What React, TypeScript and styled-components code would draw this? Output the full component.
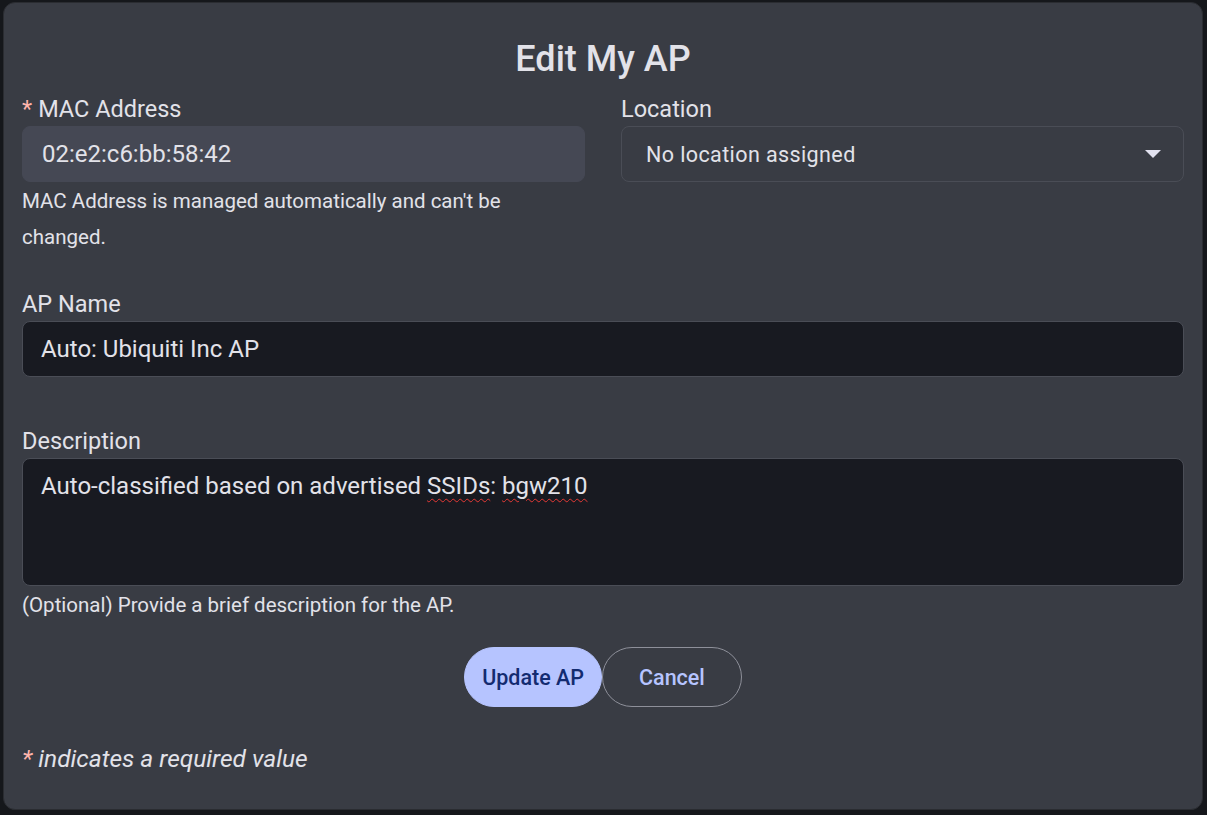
import React from 'react';
import styled, { createGlobalStyle } from 'styled-components';

const Global = createGlobalStyle`
  html, body { margin: 0; background: #15171b; height: 815px; overflow: hidden; }
  * { box-sizing: border-box; }
`;

const Dialog = styled.div`
  margin: 2px 4px 0 3px;
  height: 808px;
  background: #393c44;
  border-radius: 12px;
  border: 1px solid #2a2c31;
  padding: 0 18px;
  font-family: Roboto, "Liberation Sans", sans-serif;
  color: #e2e2e9;
`;

const Title = styled.h2`
  margin: 0;
  padding-top: 35px;
  text-align: center;
  font-size: 36px;
  font-weight: 500;
  line-height: 42px;
`;

const Row = styled.div`
  display: grid;
  grid-template-columns: 1fr 1fr;
  gap: 36px;
  margin-top: 13px;
`;

const Field = styled.div<{ $top?: number }>`
  display: flex;
  flex-direction: column;
  margin-top: ${p => p.$top ?? 0}px;
`;

const Label = styled.label`
  font-size: 23.5px;
  line-height: 32px;
  margin-bottom: 1px;
`;

const Star = styled.span`
  color: #ffb4ab;
  margin-right: 6px;
`;

const Input = styled.div<{ $variant: 'disabled' | 'outline' | 'dark' }>`
  height: 56px;
  border-radius: 8px;
  display: flex;
  align-items: center;
  justify-content: space-between;
  padding: 0 22px 0 ${p => (p.$variant === 'dark' ? 18 : 19)}px;
  background: ${p => (p.$variant === 'disabled' ? '#454854' : p.$variant === 'dark' ? '#181a21' : 'transparent')};
  border: 1px solid ${p => (p.$variant === 'disabled' ? '#454854' : '#4a4d56')};
  padding-left: ${p => (p.$variant === 'outline' ? 24 : p.$variant === 'dark' ? 18 : 19)}px;
  letter-spacing: ${p => (p.$variant === 'outline' ? '0.4px' : '0')};
  font-size: ${p => (p.$variant === 'outline' ? '21.5px' : '24px')};
`;

const TextArea = styled.div`
  height: 128px;
  border-radius: 8px;
  background: #181a21;
  border: 1px solid #4a4d56;
  padding: 12px 18px;
  font-size: 24px;
  line-height: 30px;
`;

const Squiggle = styled.span`
  text-decoration: underline wavy #e53935;
  text-decoration-thickness: 1px;
  text-underline-offset: 4px;
`;

const Help = styled.div<{ $narrow?: boolean }>`
  font-size: 20.5px;
  line-height: 36px;
  margin-top: 1px;
  max-width: ${p => (p.$narrow ? '510px' : 'none')};
`;

const Buttons = styled.div`
  display: flex;
  justify-content: center;
  margin-top: 24px;
`;

const Button = styled.button<{ $primary?: boolean }>`
  height: 60px;
  padding: 0 ${p => (p.$primary ? 17 : 36)}px;
  border-radius: 30px;
  font-family: Roboto, "Liberation Sans", sans-serif;
  font-size: 21.5px;
  font-weight: 500;
  background: ${p => (p.$primary ? '#b6c4ff' : 'transparent')};
  color: ${p => (p.$primary ? '#132b70' : '#b6c4ff')};
  border: 1px solid ${p => (p.$primary ? '#b6c4ff' : '#8e909a')};
`;

const Footer = styled.div`
  margin-top: 37px;
  font-size: 24.5px;
  font-style: italic;
`;

export default function App() {
  return (
    <>
      <Global />
      <Dialog>
        <Title>Edit My AP</Title>
        <Row>
          <Field>
            <Label><Star>*</Star>MAC Address</Label>
            <Input $variant="disabled">02:e2:c6:bb:58:42</Input>
            <Help $narrow>MAC Address is managed automatically and can't be changed.</Help>
          </Field>
          <Field>
            <Label>Location</Label>
            <Input $variant="outline">
              No location assigned
              <svg width="16" height="9" viewBox="0 0 16 9"><path d="M0 0h16L8 8z" fill="#e2e2f0" /></svg>
            </Input>
          </Field>
        </Row>
        <Field $top={33}>
          <Label>AP Name</Label>
          <Input $variant="dark">Auto: Ubiquiti Inc AP</Input>
        </Field>
        <Field $top={48}>
          <Label>Description</Label>
          <TextArea>Auto-classified based on advertised <Squiggle>SSIDs</Squiggle>: <Squiggle>bgw210</Squiggle></TextArea>
          <Help>(Optional) Provide a brief description for the AP.</Help>
        </Field>
        <Buttons>
          <Button $primary>Update AP</Button>
          <Button>Cancel</Button>
        </Buttons>
        <Footer><Star>*</Star>indicates a required value</Footer>
      </Dialog>
    </>
  );
}
